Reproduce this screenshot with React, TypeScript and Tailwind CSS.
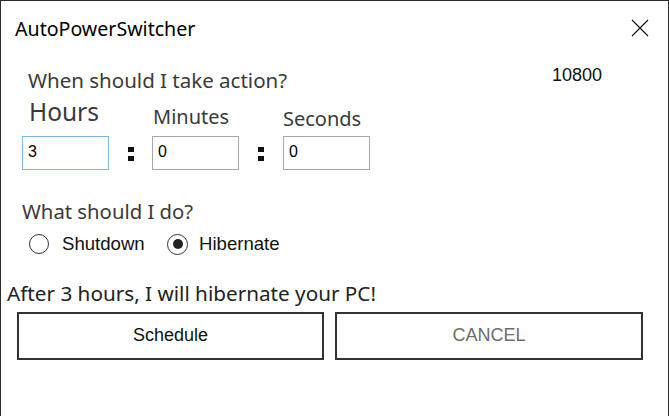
export default function App() {
  return (
    <div className="w-[669px] h-[416px] bg-white border-x border-t border-[#2b2b2b] overflow-hidden font-['Noto_Sans',sans-serif] text-[#3a3a3a]">
      {/* Title bar */}
      <div className="flex items-start justify-between h-[55px]">
        <div className="pl-[14px] pt-[18px] text-[19.6px] leading-none text-black">AutoPowerSwitcher</div>
        <svg className="mt-[18px] mr-[19px]" width="18" height="18" viewBox="0 0 18 18">
          <path d="M1 1 L17 17 M17 1 L1 17" stroke="#111" strokeWidth="1.1" fill="none" />
        </svg>
      </div>

      {/* When row */}
      <div className="flex items-start h-[44px]">
        <div className="ml-[27px] mt-[14px] text-[20.5px] leading-none">When should I take action?</div>
        <div className="ml-auto mr-[66px] mt-[10px] font-['Liberation_Sans',sans-serif] text-[18px] leading-none text-[#111]">10800</div>
      </div>

      {/* Labels */}
      <div className="flex items-start h-[36px] ml-[21px]">
        <div className="w-[87px] pl-[7px] text-[24.5px] leading-none">Hours</div>
        <div className="w-[43px]" />
        <div className="w-[87px] pl-[1px] mt-[7px] text-[20px] leading-none">Minutes</div>
        <div className="w-[44px]" />
        <div className="w-[87px] mt-[9px] text-[20px] leading-none">Seconds</div>
      </div>

      {/* Inputs */}
      <div className="flex items-center h-[34px] ml-[21px] font-['Liberation_Sans',sans-serif] text-[16px] text-black">
        <div className="w-[87px] h-[34px] border border-[#7eb4ea] flex items-center pl-[5px] pb-[3px]">3</div>
        <div className="w-[43px] flex justify-center">
          <Colon />
        </div>
        <div className="w-[87px] h-[34px] border border-[#a8a8a8] flex items-center pl-[5px] pb-[3px]">0</div>
        <div className="w-[44px] flex justify-center">
          <Colon />
        </div>
        <div className="w-[87px] h-[34px] border border-[#a8a8a8] flex items-center pl-[5px] pb-[3px]">0</div>
      </div>

      {/* What should I do */}
      <div className="ml-[21px] mt-[31px] text-[20.3px] leading-none">What should I do?</div>

      {/* Radios */}
      <div className="flex items-center h-[20px] mt-[13px] ml-[28px] font-['Liberation_Sans',sans-serif] text-[18.6px] leading-none text-[#111]">
        <div className="flex items-center w-[138px]">
          <span className="w-[20px] h-[20px] rounded-full border-[1.5px] border-[#333]" />
          <span className="ml-[13px]">Shutdown</span>
        </div>
        <div className="flex items-center">
          <span className="w-[21px] h-[21px] rounded-full border-[1.5px] border-[#333] flex items-center justify-center">
            <span className="w-[10px] h-[10px] rounded-full bg-[#222]" />
          </span>
          <span className="ml-[11px]">Hibernate</span>
        </div>
      </div>

      {/* Status */}
      <div className="ml-[6px] mt-[29px] text-[20.7px] leading-none text-[#222]">After 3 hours, I will hibernate your PC!</div>

      {/* Buttons */}
      <div className="flex ml-[16px] mt-[8px] gap-[11px] font-['Liberation_Sans',sans-serif] text-[18px]">
        <button className="w-[307px] h-[48px] border-2 border-[#333] bg-white text-[#111] flex items-center justify-center pb-[2px]">Schedule</button>
        <button className="w-[308px] h-[48px] border-2 border-[#333] bg-white text-[#6d6d6d] flex items-center justify-center pb-[2px]">CANCEL</button>
      </div>
    </div>
  );
}

function Colon() {
  return (
    <span className="flex flex-col gap-[4px] mt-[2px]" aria-label=":">
      <span className="w-[6px] h-[5px] bg-[#111]" />
      <span className="w-[6px] h-[5px] bg-[#111]" />
    </span>
  );
}
